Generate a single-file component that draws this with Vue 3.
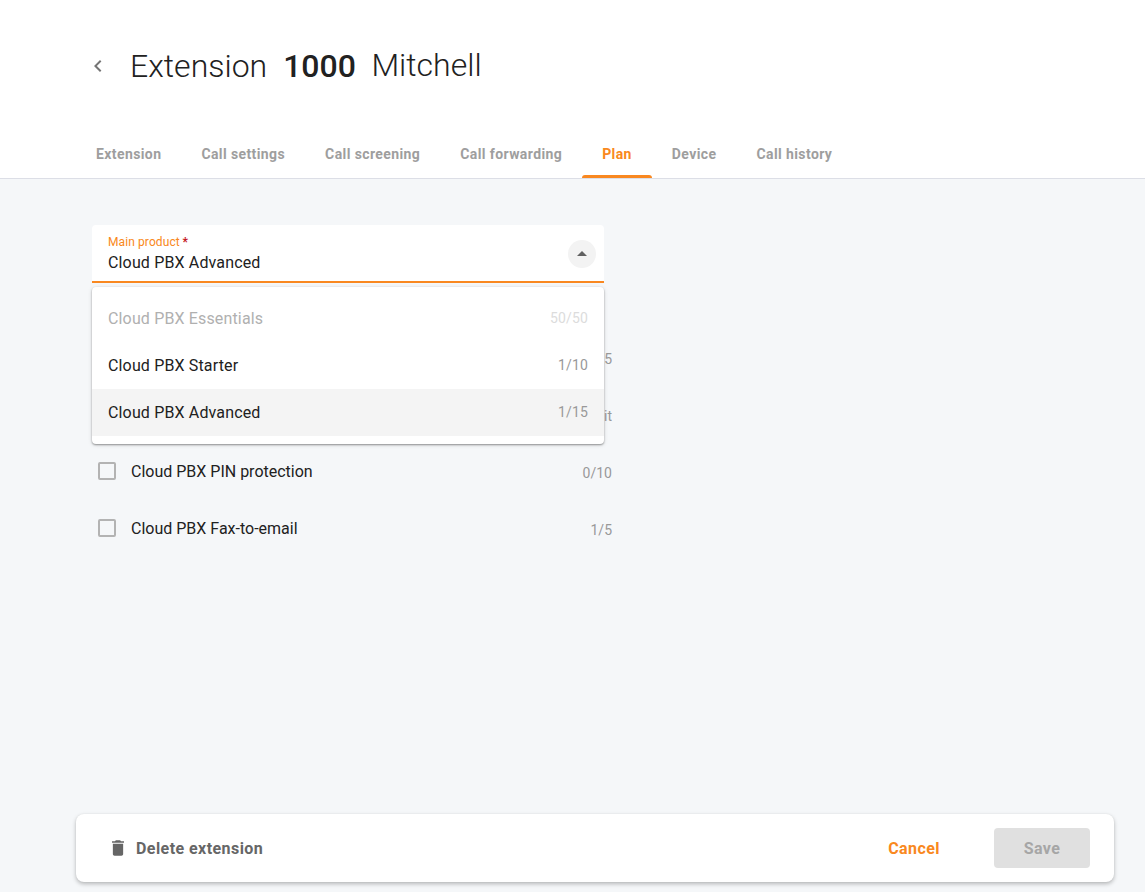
<script setup>
import { ref } from 'vue'

const tabs = ['Extension', 'Call settings', 'Call screening', 'Call forwarding', 'Plan', 'Device', 'Call history']
const activeTab = ref('Plan')
const selected = ref('Cloud PBX Advanced')
const products = [
  { name: 'Cloud PBX Essentials', usage: '50/50', disabled: true },
  { name: 'Cloud PBX Starter', usage: '1/10' },
  { name: 'Cloud PBX Advanced', usage: '1/15' },
]
const addons = [
  { name: '', usage: '5' },
  { name: '', usage: 'it' },
  { name: 'Cloud PBX PIN protection', usage: '0/10' },
  { name: 'Cloud PBX Fax-to-email', usage: '1/5' },
]
</script>

<template>
  <div class="page">
    <header class="header">
      <div class="title-row">
        <svg class="back" viewBox="0 0 24 24"><path d="M15.41 7.41 14 6l-6 6 6 6 1.41-1.41L10.83 12z" /></svg>
        <h1 class="title">
          <span class="kind">Extension</span>
          <strong class="number">1000</strong>
          <span class="owner">Mitchell</span>
        </h1>
      </div>
      <nav class="tabs">
        <a v-for="t in tabs" :key="t" class="tab" :class="{ active: t === activeTab }" @click="activeTab = t">{{ t }}</a>
      </nav>
    </header>

    <main class="content">
      <div class="select">
        <div class="field">
          <div class="field-text">
            <span class="label">Main product <b class="required">*</b></span>
            <span class="value">{{ selected }}</span>
          </div>
          <span class="toggle"><svg viewBox="0 0 10 5"><path d="M0 5 5 0l5 5z" /></svg></span>
        </div>
        <ul class="menu">
          <li v-for="p in products" :key="p.name" class="option" :class="{ disabled: p.disabled, chosen: p.name === selected }">
            <span>{{ p.name }}</span><span class="usage">{{ p.usage }}</span>
          </li>
        </ul>
      </div>
      <ul class="addons">
        <li v-for="(a, i) in addons" :key="i" class="addon">
          <span class="box"></span>
          <span class="addon-name">{{ a.name }}</span>
          <span class="usage">{{ a.usage }}</span>
        </li>
      </ul>
    </main>

    <footer class="actions">
      <button class="delete">
        <svg viewBox="0 0 14 18"><path d="M1 16c0 1.1.9 2 2 2h8c1.1 0 2-.9 2-2V4H1zM14 1h-3.5l-1-1h-5l-1 1H0v2h14z" /></svg>
        <span>Delete extension</span>
      </button>
      <button class="cancel"><span>Cancel</span></button>
      <button class="save" disabled><span>Save</span></button>
    </footer>
  </div>
</template>

<style>
body {
  background: #f5f7f9;
}
</style>

<style scoped>
.page {
  height: 892px;
  display: flex;
  flex-direction: column;
  box-sizing: border-box;
  overflow: hidden;
  background: #f5f7f9;
  color: #212121;
  font-family: Roboto, sans-serif;
  font-size: 16px;
}
.header {
  height: 179px;
  box-sizing: border-box;
  display: flex;
  flex-direction: column;
  justify-content: space-between;
  background: #fff;
  border-bottom: 1px solid #dcdee6;
}
.title-row {
  display: flex;
  align-items: center;
  padding: 46px 0 0 86px;
  height: 40px;
}
.back {
  width: 24px;
  height: 24px;
  fill: #757575;
}
.title {
  display: flex;
  margin: 0 0 0 20px;
  font-size: 32px;
  line-height: 40px;
  font-weight: 300;
  white-space: nowrap;
}
.number {
  margin: 0 15.5px 0 16px;
  font-weight: 500;
}
.owner {
  line-height: 38px;
}
.tabs {
  display: flex;
  height: 48px;
  padding-left: 76px;
}
.tab {
  box-sizing: border-box;
  height: 48px;
  padding: 0 20px;
  line-height: 48px;
  font-size: 14px;
  font-weight: 700;
  letter-spacing: 0.4px;
  color: #9e9e9e;
  white-space: nowrap;
}
.tab.active {
  position: relative;
  color: #f98820;
}
.tab.active::after {
  content: '';
  position: absolute;
  left: 0;
  right: 0;
  bottom: 0;
  height: 3px;
  border-radius: 3px 3px 0 0;
  background: #f98820;
}
.content {
  flex: 1;
  padding: 46px 0 0 92px;
}
.select {
  position: relative;
  width: 512px;
}
.field {
  display: flex;
  align-items: center;
  justify-content: space-between;
  box-sizing: border-box;
  height: 58px;
  padding: 2px 8px 0 16px;
  background: #fff;
  border-bottom: 2px solid #f98820;
  border-radius: 4px 4px 0 0;
}
.field-text {
  display: flex;
  flex-direction: column;
}
.label {
  font-size: 12px;
  line-height: 18px;
  letter-spacing: 0.1px;
  color: #f98820;
}
.required {
  margin-left: -0.5px;
  color: #c4161c;
}
.value {
  line-height: 24px;
  letter-spacing: 0.15px;
}
.toggle {
  display: flex;
  align-items: center;
  justify-content: center;
  width: 28px;
  height: 28px;
  border-radius: 50%;
  background: #f3f3f3;
}
.toggle svg {
  width: 10px;
  height: 5px;
  margin-bottom: 1px;
  fill: #616161;
}
.menu {
  position: absolute;
  z-index: 2;
  top: 62px;
  left: 0;
  width: 512px;
  box-sizing: border-box;
  margin: 0;
  padding: 8px 0;
  list-style: none;
  letter-spacing: 0.15px;
  background: #fff;
  border-radius: 4px;
  box-shadow: 0 1px 2px rgba(0, 0, 0, 0.38), 0 1px 5px rgba(0, 0, 0, 0.1);
}
.option {
  display: flex;
  justify-content: space-between;
  height: 47px;
  line-height: 47px;
  padding: 0 16px;
}
.option.chosen {
  background: #f4f4f4;
}
.option.disabled {
  color: #b0b0b0;
}
.usage {
  font-size: 14px;
  color: #999;
}
.disabled .usage {
  color: #dcdcdc;
}
.addons {
  width: 520px;
  margin: 0;
  padding: 46px 0 0;
  list-style: none;
}
.addon {
  display: flex;
  align-items: center;
  height: 57px;
}
.box {
  box-sizing: border-box;
  width: 18px;
  height: 18px;
  margin: 0 15px 1px 6px;
  border: 2px solid #b3b3b3;
  border-radius: 2px;
}
.addon-name {
  flex: 1;
}
.addon .usage {
  padding-top: 2px;
}
.actions {
  display: flex;
  align-items: center;
  height: 68px;
  box-sizing: border-box;
  margin: 0 31px 10px 76px;
  padding: 0 24px 0 36px;
  background: #fff;
  border-radius: 8px;
  box-shadow: 0 2px 4px rgba(0, 0, 0, 0.26), 0 0 2px rgba(0, 0, 0, 0.06);
}
button {
  border: 0;
  padding: 0;
  background: none;
  font: 700 16px/40px Roboto, sans-serif;
  letter-spacing: 0.44px;
}
button span {
  display: block;
  padding-top: 1px;
  line-height: 39px;
}
.delete {
  display: flex;
  align-items: center;
  margin-right: auto;
  color: #666;
}
.delete svg {
  width: 12px;
  height: 16px;
  margin-right: 12px;
  fill: #666;
}
.cancel {
  color: #f98820;
}
.save {
  width: 96px;
  height: 40px;
  margin-left: 54px;
  border-radius: 4px;
  background: #e0e0e0;
  color: #a6a6a6;
}
</style>
